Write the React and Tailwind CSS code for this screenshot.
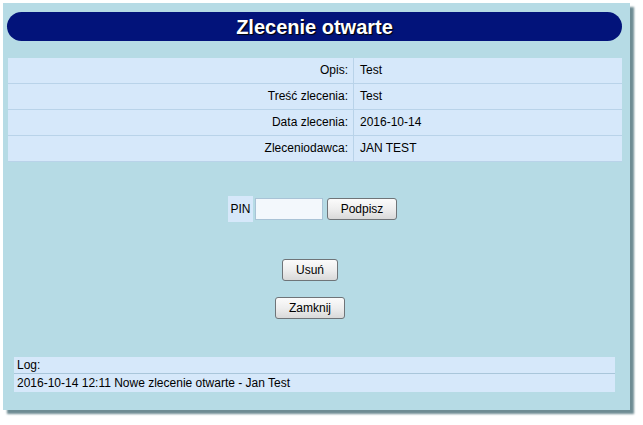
const rows = [
  { label: 'Opis:', value: 'Test' },
  { label: 'Treść zlecenia:', value: 'Test' },
  { label: 'Data zlecenia:', value: '2016-10-14' },
  { label: 'Zleceniodawca:', value: 'JAN TEST' },
];

function Btn({ children, className = '' }) {
  return (
    <button
      className={`h-[22px] rounded-[3px] border border-[#6f7478] bg-gradient-to-b from-[#fbfbfb] via-[#eeeeee] to-[#d9d9d9] text-[12px] text-black ${className}`}
    >
      {children}
    </button>
  );
}

export default function App() {
  return (
    <div
      className="w-[643px] h-[425px] bg-white pt-[3px] pl-[3px]"
      style={{ fontFamily: '"Liberation Sans", Arial, sans-serif' }}
    >
      <div className="w-[627px] h-[407px] bg-[#b6dbe5] shadow-[4px_4px_2px_#6e8c93] flex flex-col">
        {/* Header */}
        <div className="mt-[9px] ml-[4px] w-[615px] h-[29px] rounded-full bg-[#02137a] flex items-center justify-center">
          <h1 className="text-white font-bold text-[20px] leading-none [text-shadow:1px_1px_1px_#000]">
            Zlecenie otwarte
          </h1>
        </div>

        {/* Details table */}
        <div className="mt-[17px] ml-[5px] w-[614px]">
          {rows.map((r) => (
            <div key={r.label} className="flex h-[26px] bg-[#d6e8fa] border-b border-[#b9d3e9] text-[12px] text-black">
              <div className="w-[346px] pr-[5px] pb-[2px] flex items-center justify-end border-r border-[#b9d3e9]">
                {r.label}
              </div>
              <div className="pl-[6px] pb-[2px] flex items-center">{r.value}</div>
            </div>
          ))}
        </div>

        {/* PIN */}
        <div className="mt-[34px] flex justify-center pr-[8px]">
          <div className="flex items-center gap-[2px]">
            <div className="w-[25px] h-[26px] bg-[#d6e8fa] flex items-center justify-center text-[12px]">PIN</div>
            <input className="w-[68px] h-[22px] bg-[#f3f8fc] border border-[#a9c3d6] outline-none" />
            <Btn className="ml-[2px] w-[70px]">Podpisz</Btn>
          </div>
        </div>

        {/* Actions */}
        <div className="mt-[37px] flex flex-col items-center gap-[16px] pr-[13px]">
          <Btn className="w-[56px]">Usuń</Btn>
          <Btn className="w-[70px]">Zamknij</Btn>
        </div>

        {/* Log */}
        <div className="mt-[38px] ml-[11px] w-[601px] text-[12px] text-black">
          <div className="h-[17px] bg-[#d6e8fa] border-b border-[#a9c6da] pl-[3px] flex items-center">Log:</div>
          <div className="h-[18px] bg-[#d6e8fa] pl-[3px] flex items-center">
            2016-10-14 12:11 Nowe zlecenie otwarte - Jan Test
          </div>
        </div>
      </div>
    </div>
  );
}
